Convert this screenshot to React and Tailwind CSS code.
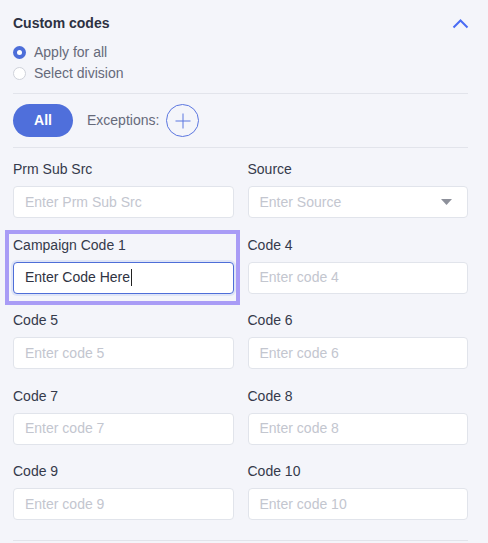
import React from 'react';

const fields = [
  { label: 'Prm Sub Src', placeholder: 'Enter Prm Sub Src' },
  { label: 'Source', placeholder: 'Enter Source', select: true },
  { label: 'Campaign Code 1', value: 'Enter Code Here', focused: true },
  { label: 'Code 4', placeholder: 'Enter code 4' },
  { label: 'Code 5', placeholder: 'Enter code 5' },
  { label: 'Code 6', placeholder: 'Enter code 6' },
  { label: 'Code 7', placeholder: 'Enter code 7' },
  { label: 'Code 8', placeholder: 'Enter code 8' },
  { label: 'Code 9', placeholder: 'Enter code 9' },
  { label: 'Code 10', placeholder: 'Enter code 10' },
];

const Field = ({ label, placeholder, value, select, focused }) => {
  return (
    <div className="relative">
      {focused && (
        <div className="absolute -left-[8px] -right-[6px] -top-[5px] -bottom-[11px] border-4 border-[#a99cf6] pointer-events-none"></div>
      )}
      <div className="text-[14px] leading-[20px] text-[#353a4b] mb-[7px]">{label}</div>
      {focused ? (
        <div className="h-[32px] rounded-[4px] border border-[#4e6ed8] bg-white shadow-[0_0_0_2px_#dfe5f7] flex items-center px-[11px]">
          <span className="text-[14px] text-[#2f3342]">{value}</span>
          <span className="w-px h-[17px] bg-[#222] ml-px"></span>
        </div>
      ) : (
        <div className="h-[32px] rounded-[4px] border border-[#e1e4eb] bg-white flex items-center justify-between px-[11px]">
          <span className="text-[14px] text-[#c3c6cf]">{placeholder}</span>
          {select && (
            <svg width="11" height="6" viewBox="0 0 11 6" className="mr-[4px]">
              <path d="M0 0 L11 0 L5.5 6 Z" fill="#8d909a" />
            </svg>
          )}
        </div>
      )}
    </div>
  );
};

const App = () => {
  return (
    <div className="w-[488px] h-[543px] overflow-hidden bg-[#f4f5fa] pl-[13px] pr-[20px] pt-[13px] [font-family:'Liberation_Sans',Arial,sans-serif]">
      {/* Header */}
      <div className="flex items-center justify-between h-[20px]">
        <h3 className="text-[14px] font-bold text-[#2d3142]">Custom codes</h3>
        <svg width="17" height="10" viewBox="0 0 17 10" className="mr-[-1px] mt-[2px]">
          <path d="M1.5 8.5 L8.5 1.5 L15.5 8.5" fill="none" stroke="#4a6cf4" strokeWidth="2" />
        </svg>
      </div>

      {/* Radios */}
      <div className="mt-[9px] flex flex-col">
        <label className="flex items-center gap-[8px] h-[21px]">
          <span className="w-[13px] h-[13px] rounded-full bg-[#4d6ed9] flex items-center justify-center">
            <span className="w-[5px] h-[5px] rounded-full bg-white"></span>
          </span>
          <span className="text-[14px] text-[#666a7a]">Apply for all</span>
        </label>
        <label className="flex items-center gap-[8px] h-[21px]">
          <span className="w-[13px] h-[13px] rounded-full bg-white border border-[#cfd2da]"></span>
          <span className="text-[14px] text-[#666a7a]">Select division</span>
        </label>
      </div>

      <div className="mt-[9px] border-t border-[#e2e4eb]"></div>

      {/* Exceptions row */}
      <div className="flex items-center h-[53px]">
        <button className="w-[60px] h-[33px] rounded-full bg-[#4f6fdb] text-white text-[14px] font-semibold">All</button>
        <span className="ml-[14px] text-[14px] text-[#666a7a]">Exceptions:</span>
        <span className="ml-[7px] w-[33px] h-[33px] rounded-full border border-[#5b76e0] flex items-center justify-center">
          <svg width="16" height="16" viewBox="0 0 16 16">
            <path d="M8 0.5 V15.5 M0.5 8 H15.5" stroke="#5b76e0" strokeWidth="1" />
          </svg>
        </span>
      </div>

      <div className="border-t border-[#e2e4eb]"></div>

      {/* Fields */}
      <div className="mt-[11px] grid grid-cols-2 gap-x-[14px] gap-y-[16.5px]">
        {fields.map((f) => (
          <Field key={f.label} {...f} />
        ))}
      </div>

      <div className="mt-[20px] border-t border-[#e2e4eb]"></div>
    </div>
  );
};

export default App;
